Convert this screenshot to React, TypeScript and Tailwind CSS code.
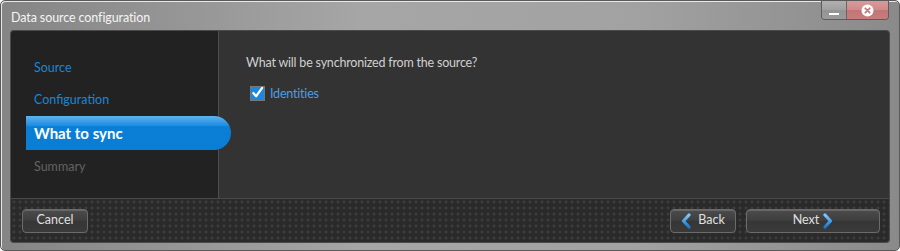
import React from "react";

const font = { fontFamily: '"Segoe UI", Lato, "Noto Sans", sans-serif' };

function Chevron({ dir }: { dir: "left" | "right" }) {
  return (
    <svg width="10" height="16" viewBox="0 0 10 16">
      <defs>
        <linearGradient id={`cg-${dir}`} x1="0" y1="0" x2="0" y2="1">
          <stop offset="0" stopColor="#7cc6ff" />
          <stop offset="1" stopColor="#1479d0" />
        </linearGradient>
      </defs>
      {dir === "left" ? (
        <polyline points="8,2 2.5,8 8,14" fill="none" stroke={`url(#cg-${dir})`} strokeWidth="3.2" strokeLinecap="round" strokeLinejoin="round" />
      ) : (
        <polyline points="2,2 7.5,8 2,14" fill="none" stroke={`url(#cg-${dir})`} strokeWidth="3.2" strokeLinecap="round" strokeLinejoin="round" />
      )}
    </svg>
  );
}

function Btn({ children, className = "" }: { children: React.ReactNode; className?: string }) {
  return (
    <div
      className={`flex items-center justify-center gap-1 h-[24px] rounded-[4px] border border-[#6b6b6b] bg-[linear-gradient(#4c4c4c,#3d3d3d_50%,#363636_51%,#3a3a3a)] text-[12.5px] text-[#e0e0e0] shadow-[inset_0_1px_0_rgba(255,255,255,0.15)] ${className}`}
    >
      {children}
    </div>
  );
}

export default function App() {
  return (
    <div className="w-[900px] h-[251px] bg-white" style={font}>
      <div className="relative w-[900px] h-[251px] rounded-[5px] border border-[#5a5a5a] bg-[linear-gradient(90deg,#858585,#a6a6a6_40%,#a2a2a2_70%,#8a8a8a)] shadow-[inset_1px_1px_0_#e8e8e8] flex flex-col px-[9px] pb-[7px]">
        {/* title bar */}
        <div className="h-[29px] flex items-start pt-[9px] pl-[1px] text-[12.5px] tracking-[-0.1px] text-[#f4f4f4] leading-[16px]">
          Data source configuration
        </div>
        <div className="absolute top-0 right-[10px] flex h-[19px] rounded-b-[4px] border border-t-0 border-[#5c5c5c] overflow-hidden">
          <div className="w-[25px] bg-[linear-gradient(#b0b0b0,#a0a0a0_50%,#949494_51%,#9a9a9a)] border-r border-[#666] flex items-end justify-center pb-[4px]">
            <div className="w-[10px] h-[2px] bg-white" />
          </div>
          <div className="w-[41px] bg-[linear-gradient(#d99a9a,#cf8a8a_50%,#c27474_51%,#c77d7d)] flex items-center justify-center">
            <svg width="13" height="13" viewBox="0 0 13 13">
              <circle cx="6.5" cy="6.5" r="6" fill="#fff" />
              <path d="M4.3 4.3 L8.7 8.7 M8.7 4.3 L4.3 8.7" stroke="#c77d7d" strokeWidth="1.8" strokeLinecap="round" />
            </svg>
          </div>
        </div>

        {/* inner panel */}
        <div className="flex-1 flex flex-col rounded-[3px] overflow-hidden border border-[#4a4a4a]">
          <div className="flex h-[167px]">
            <div className="w-[208px] bg-[#222222] border-r border-[#4e4e4e] pt-[29px] relative">
              <div className="pl-[23px] h-[32px] text-[12.5px] text-[#1b86d6] leading-[16px]">Source</div>
              <div className="pl-[23px] h-[24px] text-[12.5px] text-[#1b86d6] leading-[16px]">Configuration</div>
              <div className="relative h-[34px] w-[205px] ml-[15px] rounded-r-[17px] bg-[linear-gradient(#5fb3ee,#1a8ae0_30%,#0b7fd6_31%,#0a7dd4)] text-white font-bold text-[15px] flex items-center pl-[8px] z-10">
                What to sync
              </div>
              <div className="pl-[23px] pt-[9px] text-[12.5px] text-[#626262] leading-[16px]">Summary</div>
            </div>
            <div className="flex-1 bg-[#333333] pt-[24px] pl-[27px]">
              <div className="text-[12.5px] tracking-[-0.2px] text-[#d0d0d0] leading-[16px]">What will be synchronized from the source?</div>
              <div className="flex items-center mt-[13px] ml-[4px] gap-[5px]">
                <div className="w-[15px] h-[15px] border border-[#777] bg-[#1b87e0] flex items-center justify-center">
                  <svg width="14" height="14" viewBox="0 0 14 14">
                    <path d="M2.5 7 L5.5 10.5 L12 1.5" fill="none" stroke="#fff" strokeWidth="2.4" strokeLinecap="round" strokeLinejoin="round" />
                  </svg>
                </div>
                <span className="text-[12.5px] tracking-[-0.2px] text-[#4b9de6] leading-[16px] pt-[2px]">Identities</span>
              </div>
            </div>
          </div>
          <div className="flex-1 border-t border-[#4a4a4a] bg-[#2a2a2a] bg-[radial-gradient(circle,#3c3c3c_1.2px,transparent_1.8px)] bg-[length:6px_6px] flex items-center pl-[11px] pr-[9px]">
            <Btn className="w-[66px]">Cancel</Btn>
            <div className="flex-1" />
            <Btn className="w-[66px]">
              <Chevron dir="left" />
              <span className="ml-[3px]">Back</span>
            </Btn>
            <Btn className="w-[134px] ml-[10px]">
              <span>Next</span>
              <Chevron dir="right" />
            </Btn>
          </div>
        </div>
      </div>
    </div>
  );
}
